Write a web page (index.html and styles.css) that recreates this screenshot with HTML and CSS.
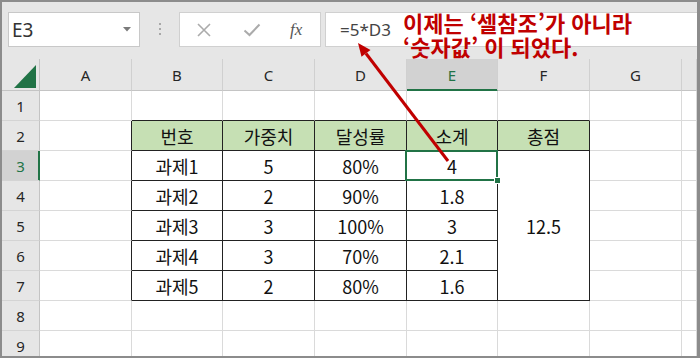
FILE: index.html
```html
<!DOCTYPE html>
<html lang="ko">
<head>
<meta charset="utf-8">
<link rel="stylesheet" href="styles.css">
</head>
<body>
<div class="frame">
  <div class="toolbar">
    <div class="namebox">
      <span class="ref">E3</span>
      <svg class="caret" width="8" height="5" viewBox="0 0 8 5"><polygon points="0,0 8,0 4,4.5" fill="#7a7a7a"/></svg>
    </div>
    <div class="grip"><i></i><i></i><i></i></div>
    <div class="fbtns">
      <svg class="btn-x" width="16" height="16" viewBox="0 0 16 16"><path d="M2 2 L14 14 M14 2 L2 14" stroke="#ababab" stroke-width="1.6" fill="none"/></svg>
      <svg class="btn-ok" width="18" height="14" viewBox="0 0 18 14"><path d="M1.5 7.5 L6.5 12 L16.5 1.5" stroke="#ababab" stroke-width="2" fill="none"/></svg>
      <span class="fx">fx</span>
    </div>
    <div class="formula">=5*D3</div>
  </div>
  <table class="sheet">
    <colgroup>
      <col class="c-rh"><col class="c-w"><col class="c-n"><col class="c-w"><col class="c-w"><col class="c-n"><col class="c-w"><col class="c-w"><col class="c-h">
    </colgroup>
    <tr class="colhead">
      <th class="corner"><svg width="22" height="23" viewBox="0 0 22 23"><polygon points="22,0 22,23 0,23" fill="#217346"/></svg></th>
      <th>A</th><th>B</th><th>C</th><th>D</th><th class="selcol">E</th><th>F</th><th>G</th><th></th>
    </tr>
    <tr>
      <th class="rh">1</th><td></td><td class="db"></td><td class="db"></td><td class="db"></td><td class="db"></td><td class="db"></td><td></td><td></td>
    </tr>
    <tr>
      <th class="rh">2</th><td class="dr"></td><td class="tb hd">번호</td><td class="tb hd">가중치</td><td class="tb hd">달성률</td><td class="tb hd">소계</td><td class="tb hd">총점</td><td></td><td></td>
    </tr>
    <tr>
      <th class="rh selrow">3</th><td class="dr"></td><td class="tb">과제1</td><td class="tb">5</td><td class="tb">80%</td><td class="tb selected">4</td><td class="tb" rowspan="5">12.5</td><td></td><td></td>
    </tr>
    <tr>
      <th class="rh">4</th><td class="dr"></td><td class="tb">과제2</td><td class="tb">2</td><td class="tb">90%</td><td class="tb">1.8</td><td></td><td></td>
    </tr>
    <tr>
      <th class="rh">5</th><td class="dr"></td><td class="tb">과제3</td><td class="tb">3</td><td class="tb">100%</td><td class="tb">3</td><td></td><td></td>
    </tr>
    <tr>
      <th class="rh">6</th><td class="dr"></td><td class="tb">과제4</td><td class="tb">3</td><td class="tb">70%</td><td class="tb">2.1</td><td></td><td></td>
    </tr>
    <tr>
      <th class="rh">7</th><td class="dr"></td><td class="tb">과제5</td><td class="tb">2</td><td class="tb">80%</td><td class="tb">1.6</td><td></td><td></td>
    </tr>
    <tr>
      <th class="rh">8</th><td></td><td></td><td></td><td></td><td></td><td></td><td></td><td></td>
    </tr>
    <tr>
      <th class="rh">9</th><td></td><td></td><td></td><td></td><td></td><td></td><td></td><td></td>
    </tr>
  </table>
  <div class="note"><div class="note-line">이제는 ‘셀참조’가 아니라</div><div class="note-line">‘숫자값’ 이 되었다.</div></div>
  <svg class="arrow" width="700" height="358" viewBox="0 0 700 358">
    <line x1="448" y1="161" x2="366" y2="53.5" stroke="#c00000" stroke-width="3"/>
    <polygon points="358,43 370.5,50 361.5,56.8" fill="#c00000"/>
  </svg>
</div>
</body>
</html>
```

FILE: styles.css
```css
html, body {
  margin: 0;
  padding: 0;
  background: #ffffff;
}

.frame {
  position: relative;
  width: 700px;
  height: 358px;
  box-sizing: border-box;
  border: 2px solid #8c8c8c;
  border-right-width: 3px;
  overflow: hidden;
  background: #ffffff;
  font-family: "Noto Sans", "Noto Sans CJK KR", sans-serif;
}

.toolbar {
  display: flex;
  align-items: flex-start;
  height: 57px;
  box-sizing: border-box;
  padding: 10px 0 0 6px;
  background: #e6e6e6;
}

.namebox {
  display: flex;
  align-items: center;
  justify-content: space-between;
  width: 132px;
  height: 35px;
  box-sizing: border-box;
  border: 1px solid #c8c8c8;
  background: #ffffff;
  padding: 0 8px 0 3px;
}

.ref {
  font-size: 19px;
  color: #333333;
}

.grip {
  display: flex;
  flex-direction: column;
  gap: 3px;
  margin: 11px 0 0 19px;
}

.grip i {
  display: block;
  width: 2px;
  height: 2px;
  background: #a8a8a8;
}

.fbtns {
  display: flex;
  align-items: center;
  width: 142px;
  height: 35px;
  box-sizing: border-box;
  margin-left: 18px;
  border: 1px solid #d0d0d0;
  background: #ffffff;
  padding-left: 16px;
}

.btn-ok {
  margin-left: 31px;
}

.fx {
  margin-left: 29px;
  font-family: "Liberation Serif", "DejaVu Serif", serif;
  font-style: italic;
  font-size: 17px;
  color: #555555;
}

.formula {
  flex: 1;
  height: 35px;
  box-sizing: border-box;
  margin-left: 4px;
  border: 1px solid #d0d0d0;
  border-right: none;
  background: #ffffff;
  padding-left: 14px;
  font-size: 17px;
  line-height: 33px;
  color: #444444;
}

.sheet {
  table-layout: fixed;
  width: 695px;
  border-collapse: separate;
  border-spacing: 0;
}

.c-rh { width: 38px; }
.c-w { width: 92px; }
.c-n { width: 91px; }
.c-h { width: 15px; }

.sheet th,
.sheet td {
  padding: 0;
  box-sizing: border-box;
  height: 30px;
  text-align: center;
  vertical-align: middle;
}

.sheet td {
  border-right: 1px solid #dadada;
  border-bottom: 1px solid #dadada;
  font-family: "Noto Sans CJK KR", sans-serif;
  font-size: 18px;
  color: #111111;
}

.colhead th {
  height: 32px;
  background: #e6e6e6;
  border-right: 1px solid #d0d0d0;
  border-bottom: 1px solid #c4c4c4;
  font-weight: normal;
  font-size: 15px;
  color: #262626;
}

.colhead th.corner {
  text-align: right;
  vertical-align: bottom;
  padding: 0 3px 2px 0;
  border-right: 1px solid #c4c4c4;
}

.corner svg {
  display: block;
  margin-left: auto;
}

.colhead th.selcol {
  background: #d2d2d2;
  color: #217346;
  border-bottom: 1px solid #217346;
  box-shadow: inset 0 -1px 0 #217346;
}

.sheet th.rh {
  background: #e6e6e6;
  border-right: 1px solid #c4c4c4;
  border-bottom: 1px solid #d4d4d4;
  font-weight: normal;
  font-size: 15px;
  color: #262626;
}

.sheet th.selrow {
  background: #d2d2d2;
  color: #217346;
  border-right: 1px solid #217346;
  box-shadow: inset -1px 0 0 #217346;
}

.sheet td.dr {
  border-right-color: #222222;
}

.sheet td.db {
  border-bottom-color: #222222;
}

.sheet td.tb {
  border-right-color: #222222;
  border-bottom-color: #222222;
}

.sheet td.hd {
  background: #c6e0b4;
}

.sheet td.selected {
  position: relative;
}

.sheet td.selected::before {
  content: "";
  position: absolute;
  left: -2px;
  top: -1px;
  right: -1px;
  bottom: -1px;
  border: 2px solid #217346;
}

.sheet td.selected::after {
  content: "";
  position: absolute;
  right: -4px;
  bottom: -4px;
  width: 5px;
  height: 5px;
  background: #217346;
  border: 1px solid #ffffff;
}

.note {
  position: absolute;
  left: 401px;
  top: 9px;
  font-family: "Noto Sans CJK KR", sans-serif;
  font-weight: bold;
  font-size: 22px;
  color: #c00000;
  white-space: nowrap;
}

.note-line {
  height: 24px;
  line-height: 22px;
}

.arrow {
  position: absolute;
  left: -2px;
  top: -2px;
}
```
